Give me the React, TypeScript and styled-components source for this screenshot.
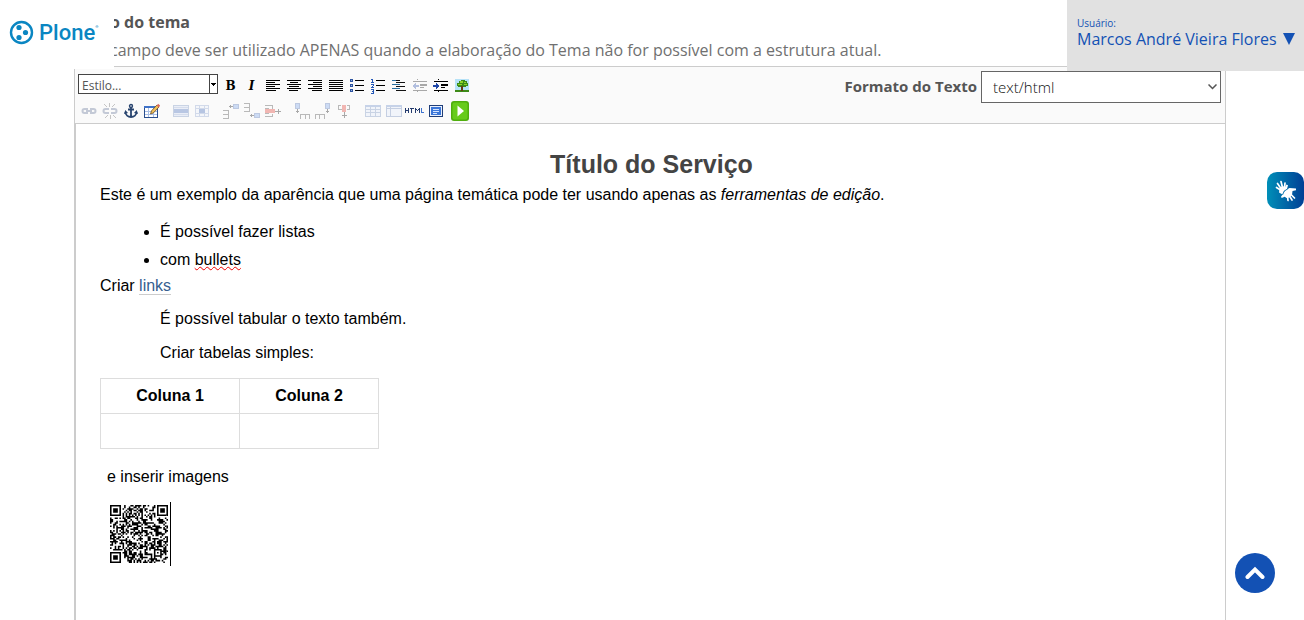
import React from "react";
import styled, { createGlobalStyle, css } from "styled-components";

const sans = `"Liberation Sans", Arial, sans-serif`;
const ui = `"Open Sans", "Noto Sans", sans-serif`;

const GlobalStyle = createGlobalStyle`
  *, *::before, *::after { box-sizing: border-box; }
  html, body { margin: 0; background: #fff; }
  body { font: 400 16px/28px ${ui}; color: #555; }
  button { border: 0; padding: 0; background: none; cursor: pointer; }
  a { color: inherit; text-decoration: none; }
  svg { display: block; flex: none; }
`;

const Page = styled.div`
  position: relative;
  min-height: 100vh;
  display: flex;
  flex-direction: column;
  padding: 8px 78px 0 74px;
`;

const LogoLink = styled.a`
  position: absolute;
  left: 0;
  top: 0;
  width: 114px;
  height: 69px;
  padding: 0 0 4px 9px;
  display: flex;
  align-items: center;
  gap: 5px;
  background: #fff;
  color: #0a86c2;
  font: 500 22px/24px Roboto, sans-serif;
`;

const LogoWord = styled.span`
  display: flex;
  sup { font-size: 4px; line-height: 12px; }
`;

const UserPanel = styled.div`
  position: absolute;
  right: 0;
  top: 0;
  width: 237px;
  height: 71px;
  padding: 16px 10px;
  background: #e1e1e1;
  color: #1351b4;
  white-space: nowrap;
`;

const UserCaption = styled.div`
  font-size: 10px;
  line-height: 14px;
`;

const UserButton = styled.button`
  display: flex;
  align-items: center;
  gap: 6px;
  color: #1351b4;
  font: 400 16px/18px ${ui};
`;

const FieldHead = styled.header`
  margin-left: 40px;
  padding-bottom: 2px;
  overflow: hidden;
  text-indent: -4px;
`;

const FieldTitle = styled.label`
  display: block;
  font-weight: 700;
`;

const FieldHelp = styled.p`
  margin: 0;
  color: #707070;
`;

const Editor = styled.section`
  flex: 1;
  display: flex;
  flex-direction: column;
  border: 1px solid #ccc;
  border-bottom: 0;
`;

const Toolbar = styled.div`
  display: flex;
  justify-content: space-between;
  padding: 3px 4px 0 3px;
  height: 57px;
  background: #fafafa;
  border-bottom: 1px solid #ccc;
`;

const ToolRows = styled.div`
  display: flex;
  flex-direction: column;
  gap: 1px;
  padding-top: 4px;
`;

const ToolRow = styled.div`
  display: flex;
  align-items: center;
  height: 24px;
`;

const ToolGroup = styled.div`
  display: flex;
  align-items: center;
  margin-right: 8px;
`;

const ToolButton = styled.button<{ $off?: boolean; $wide?: boolean }>`
  width: ${(p) => (p.$wide ? 28 : 21)}px;
  height: 20px;
  display: flex;
  align-items: center;
  justify-content: center;
  ${(p) => p.$off && css`opacity: 0.32;`}
`;

const Letter = styled.span<{ $italic?: boolean }>`
  font: ${(p) => (p.$italic ? "italic" : "normal")} 700 12px/16px "DejaVu Serif", serif;
  color: #000;
`;

const StyleBox = styled.div`
  position: relative;
  align-self: flex-start;
  width: 140px;
  height: 20px;
  margin-right: 2px;
`;

const StyleSelect = styled.select`
  display: block;
  appearance: none;
  width: 100%;
  height: 100%;
  padding: 2px 12px 0 3px;
  border: 1px solid #444;
  border-radius: 0;
  background: #fff;
  color: #555;
  font: 400 12px/18px ${ui};
`;

const StyleArrow = styled.span`
  position: absolute;
  right: 0;
  top: 0;
  width: 9px;
  height: 20px;
  border: 1px solid #444;
  display: flex;
  align-items: center;
  justify-content: center;
  pointer-events: none;
`;

const Format = styled.div`
  display: flex;
  align-items: flex-start;
  gap: 4px;
  padding-top: 1px;
  label { font-size: 15px; font-weight: 700; line-height: 30px; }
`;

const FormatBox = styled.div`
  position: relative;
  width: 240px;
  height: 32px;
  svg { position: absolute; right: 4px; top: 13px; pointer-events: none; }
`;

const FormatSelect = styled.select`
  display: block;
  appearance: none;
  width: 100%;
  height: 100%;
  padding: 0 11px;
  border: 1px solid #666;
  border-radius: 0;
  background: #fff;
  color: #111;
  font: 300 15px/28px ${ui};
`;

const Document = styled.article`
  flex: 1;
  padding: 24px 22px 0 24px;
  border-left: 1px solid #ccc;
  background: #fff;
  color: #000;
  font: 400 16px/24px ${sans};
  p { margin: 0; }
`;

const Heading = styled.h1`
  margin: 0 0 3px;
  text-align: center;
  color: #444;
  font: 700 25px/32px ${sans};
`;

const List = styled.ul`
  margin: 11px 0 0;
  padding-left: 60px;
  line-height: 28px;
`;

const Misspelt = styled.span`
  text-decoration: underline wavy #e00 1px;
  text-decoration-skip-ink: none;
  text-underline-offset: 1px;
`;

const TextLink = styled.a`
  color: #35608f;
  border-bottom: 1px solid #ccc;
`;

const Indented = styled.div`
  display: flex;
  flex-direction: column;
  gap: 10px;
  padding: 9px 0 13px 60px;
`;

const Grid = styled.table`
  border-collapse: collapse;
  th, td { width: 139px; height: 35px; padding: 0; border: 1px solid #ddd; }
`;

const Closing = styled.div`
  display: flex;
  flex-direction: column;
  align-items: flex-start;
  gap: 13px;
  padding: 16px 7px 0;
`;

const ImageLine = styled.div`
  padding: 3px 2px 3px 3px;
  border-right: 1px solid #000;
`;

const HandsButton = styled.button`
  position: absolute;
  right: 0;
  top: 172px;
  width: 37px;
  height: 37px;
  border-radius: 10px;
  background: linear-gradient(90deg, #008fb8, #003f95);
  display: flex;
  align-items: center;
  justify-content: center;
`;

const TopButton = styled.button`
  position: absolute;
  right: 29px;
  bottom: 27px;
  width: 40px;
  height: 40px;
  border-radius: 50%;
  background: #1351b4;
  display: flex;
  align-items: center;
  justify-content: center;
`;

const Icon = ({ children, w = 16, h = 16, smooth = false }: { children: React.ReactNode; w?: number; h?: number; smooth?: boolean }) => (
  <svg width={w} height={h} viewBox={`0 0 ${w} ${h}`} fill="none" shapeRendering={smooth ? "auto" : "crispEdges"} aria-hidden="true">
    {children}
  </svg>
);

/* Each entry of rows is [x, width] of one text line, two pixels apart. */
const Lines = ({ rows, color = "#000" }: { rows: [number, number][]; color?: string }) => (
  <Icon>
    {rows.map(([x, w], i) => (
      <rect key={i} x={x} y={2 + i * 2} width={w} height={1} fill={color} />
    ))}
  </Icon>
);

const alignLeft: [number, number][] = [[1, 14], [1, 9], [1, 14], [1, 9], [1, 14], [1, 10]];
const alignCenter: [number, number][] = [[1, 14], [4, 8], [1, 14], [3, 10], [1, 14], [3, 9]];
const alignRight: [number, number][] = [[1, 14], [6, 9], [1, 14], [6, 9], [1, 14], [5, 10]];
const justify: [number, number][] = [[1, 14], [1, 14], [1, 14], [1, 14], [1, 14], [1, 14]];

const Bullets = () => (
  <Icon>
    {[1, 6, 11].map((y) => (
      <g key={y}>
        <rect x="1" y={y} width="3" height="3" fill="#2c53a0" />
        <rect x="2" y={y + 1} width="1" height="1" fill="#9db5e0" />
        <rect x="6" y={y + 1} width="9" height="1" fill="#000" />
      </g>
    ))}
  </Icon>
);

const Numbers = () => (
  <Icon>
    <path d="M1 1.500h2M2.500 1v3M1 4.500h3M1 6.500h3M3.500 6v2M2 8.500h1M1 9.500h3M1 11.500h3M3.500 11v4M2 13.500h2M1 15.500h3" stroke="#2458b8" />
    <path d="M6 2.500h9M6 7.500h9M6 12.500h9" stroke="#000" />
  </Icon>
);

const Definition = () => (
  <Icon>
    <path d="M1 2.500h8M1 6.500h8M1 10.500h8" stroke="#2a6f9f" />
    <path d="M5 4.500h9M5 8.500h9M5 12.500h10M5 2.500h4" stroke="#111" />
  </Icon>
);

const Indent = ({ out = false }: { out?: boolean }) => (
  <Icon>
    <path d="M1 3.500h14M1 12.500h14M8 9.500h4" stroke="#000" />
    <path d="M8 6h7v2H8z" fill="#000" />
    <path d="M5.500 1v2M5.500 13v2" stroke="#000" strokeDasharray="1 1" />
    <rect x="0" y="5" width="7" height="6" fill="#fafafa" />
    <path d={out ? "M0 8l4-3v2h3v2H4v2z" : "M7 8L3 5v2H0v2h3v2z"} fill="#1f47a8" />
  </Icon>
);

const Tree = () => (
  <Icon>
    <rect x="1" y="1" width="14" height="13" fill="#b6e2f7" />
    <rect x="1" y="12" width="14" height="2" fill="#3d8a18" />
    <path d="M3 5h2V3h2V2h4v1h2v2h1v3h-2v1H4V8H3z" fill="#3a8c17" />
    <path d="M6 3h3v2H6zM10 4h2v1h-2zM4 6h4v1H4zM10 6h3v1h-3z" fill="#8fd32b" />
    <path d="M7 8h2v5H7z" fill="#653b13" />
  </Icon>
);

const Chain = ({ broken = false }: { broken?: boolean }) => (
  <Icon smooth>
    <path d="M7 6H3.500a2 2 0 000 4H7M9 6h3.500a2 2 0 010 4H9" stroke="#52658c" strokeWidth="2" />
    {broken ? (
      <path d="M7.500 4V0M5 4L2 1M10 4l3-3M8.500 12v4M6 12l-3 3M11 12l3 3" stroke="#555" />
    ) : (
      <path d="M5 8h6" stroke="#52658c" strokeWidth="2" />
    )}
  </Icon>
);

const Anchor = () => (
  <Icon smooth>
    <circle cx="8" cy="3" r="1.500" stroke="#28446f" strokeWidth="1.400" />
    <path d="M8 4.500V14M5 6.500h6M2.500 9c0 3 2.500 5 5.500 5s5.500-2 5.500-5" stroke="#28446f" strokeWidth="1.800" />
    <path d="M1 11l1.300-4L5 10zM15 11l-1.300-4L11 10z" fill="#28446f" />
  </Icon>
);

const TableSplit = () => (
  <Icon>
    <rect x="0" y="2" width="16" height="12" fill="#dfe9fb" />
    <path d="M.5 2.500h15v11H.5zM.5 6.500h15M.5 9.500h15M5.500 3v11M10.500 3v11" stroke="#6482b9" />
    <rect x="0" y="2" width="16" height="2" fill="#5b7fc4" />
  </Icon>
);

const TableEdit = () => (
  <Icon>
    <rect x="0" y="3" width="14" height="12" fill="#fff" />
    <path d="M0 8.500h14M0 11.500h14M4.500 5v10M9.500 5v10" stroke="#a9bfe6" />
    <path d="M.5 3.500h13v11H.5z" stroke="#2b4f8f" />
    <rect x="0" y="3" width="14" height="2" fill="#3f72c8" />
    <g shapeRendering="auto">
      <path d="M6.500 11l1-3.200L13 2l2 2-5.700 6z" fill="#f0c05a" stroke="#6b4d22" strokeWidth=".8" />
      <path d="M12.600 2.400L14.200.8l2 2-1.600 1.600z" fill="#d86a5a" />
    </g>
  </Icon>
);

const RowProps = () => (
  <Icon>
    <rect x="1" y="2" width="14" height="12" fill="#cbd8f2" />
    <path d="M.5 2.500h15v11H.5z" stroke="#6482b9" />
    <rect x="1" y="6" width="14" height="4" fill="#345eb5" />
    <path d="M1 4.500h14M1 11.500h14" stroke="#8ba3d0" />
  </Icon>
);

const CellProps = () => (
  <Icon>
    <rect x="1" y="2" width="14" height="12" fill="#e8eefb" />
    <path d="M1.500 2.500h13v11h-13zM1 5.500h14M1 10.500h14M5.500 3v11M10.500 3v11" stroke="#7f99cb" />
    <rect x="5" y="6" width="6" height="4" fill="#2b57b3" />
  </Icon>
);

const RowInsert = ({ after = false }: { after?: boolean }) => (
  <Icon>
    <g transform={after ? "translate(0 16) scale(1 -1)" : undefined}>
      <path d="M0 7.500h6M0 11.500h6M0 15.500h6M5.500 7v9" stroke="#333" />
      <path d="M6 3.500h4M7.500 2v3" stroke="#000" />
      <rect x="10.500" y="1.500" width="5" height="4" fill="#6f9be8" stroke="#3e65af" />
    </g>
  </Icon>
);

const RowDelete = () => (
  <Icon>
    <path d="M0 2.500h7v3M0 13.500h7v-3M0 5.500h4M0 10.500h4" stroke="#333" />
    <rect x="0" y="6" width="10" height="4" fill="#e02a1d" />
    <path d="M10 8.500h6M13.500 6v5" stroke="#000" />
  </Icon>
);

const ColInsert = ({ after = false }: { after?: boolean }) => (
  <Icon>
    <g transform={after ? "translate(16 0) scale(-1 1)" : undefined}>
      <rect x="1.500" y=".5" width="4" height="5" fill="#6f9be8" stroke="#3e65af" />
      <path d="M3.500 6v4M2 8.500h3" stroke="#000" />
      <path d="M6.500 16v-5h9v5M11.500 11v5" stroke="#333" />
    </g>
  </Icon>
);

const ColDelete = () => (
  <Icon>
    <path d="M2.500 2v4h3M13.500 2v4h-3M2 2.500h3M11 2.500h3" stroke="#333" />
    <rect x="6" y="2" width="4" height="7" fill="#e02a1d" />
    <path d="M8 9v6M6 12.500h5" stroke="#000" />
  </Icon>
);

const TableMerge = () => (
  <Icon>
    <rect x="1" y="2" width="14" height="12" fill="#dfe9fb" />
    <path d="M.5 2.500h15v11H.5zM1 5.500h15M4.500 3v11" stroke="#5877b0" />
    <rect x="0" y="2" width="16" height="2" fill="#5b7fc4" />
  </Icon>
);

const Html = () => (
  <Icon w={19} h={8}>
    <path d="M.5 1v5M3.500 1v5M1 3.500h2M5 1.500h4M6.500 1v5M10.500 6V1M11 2.500h1M12 3.500h1M13 2.500h1M14.500 1v5" stroke="#243b6e" />
    <path d="M16.500 1v5M16 5.500h3" stroke="#3f74d0" />
  </Icon>
);

const FullScreen = () => (
  <Icon>
    <rect x="1.500" y="2.500" width="13" height="11" fill="#eaf1fd" stroke="#203e78" />
    <rect x="3" y="4" width="10" height="8" fill="#3b76d8" />
    <path d="M5 6.500h6M5 8.500h6M5 10.500h4" stroke="#d4e4ff" />
  </Icon>
);

const Play = () => (
  <Icon w={20} h={20} smooth>
    <rect x="1" y="0" width="18" height="20" rx="3" fill="#4fae0d" />
    <rect x="2.500" y="1.500" width="15" height="17" rx="2" fill="#67cb1b" />
    <path d="M7.500 4.500l6.500 5.500-6.500 5.500z" fill="#fff" />
  </Icon>
);

/* Two signing hands: one with its fingers up to the left, one with them down to the right. */
const Hands = () => (
  <Icon w={24} h={24} smooth>
    <g stroke="#fff" strokeLinecap="round" strokeWidth="1.700">
      <path d="M6.500 11L2.500 8.500M7 9.500L3.500 4.500M8.500 8.500L7 2.500M10.500 8.500L11 4" />
      <path d="M13.500 17l.5 4.500M15.500 17l2.500 4M17 15.500l3.500 3.500" />
    </g>
    <path d="M5.500 9.500L8.500 7l2.500 1 1.500-2.500 1.500.7L13 10l-3 2-1.500 3.500-3.500-2z" fill="#fff" />
    <path d="M9.500 14l1.500-2.500 4.500-2.500 6.500.5v1.700l-3.500.8-.5 4-2.500 2.500-3 .5-1.800-1.200-3 1.200-.7-1.200z" fill="#fff" />
    <path d="M8.500 16l1.700-3.800 3.600-2.400" stroke="#0670a9" strokeWidth=".8" />
  </Icon>
);

/* 37 x 37 symbol: three finder squares, an alignment square, timing rows and data modules. */
const SIZE = 37;
const ring = (x: number, y: number, cx: number, cy: number) => Math.max(Math.abs(x - cx), Math.abs(y - cy));
const isDark = (x: number, y: number) => {
  for (const [cx, cy] of [[3, 3], [SIZE - 4, 3], [3, SIZE - 4]]) {
    const d = ring(x, y, cx, cy);
    if (d <= 4) return d !== 2 && d !== 4;
  }
  const a = ring(x, y, 30, 30);
  if (a <= 2) return a !== 1;
  if (x === 6 || y === 6) return (x + y) % 2 === 0;
  let h = (x * 374761393 + y * 668265263) | 0;
  h = Math.imul(h ^ (h >>> 13), 1274126177);
  return ((h ^ (h >>> 16)) & 255) < 132;
};
let qrPath = "";
for (let y = 0; y < SIZE; y++) for (let x = 0; x < SIZE; x++) if (isDark(x, y)) qrPath += `M${x} ${y}h1v1h-1z`;

const QrCode = () => (
  <svg width="58" height="58" viewBox="0 0 37 37" role="img" aria-label="QR">
    <path d={qrPath} fill="#000" />
  </svg>
);

type Tool = { name: string; icon: React.ReactNode; off?: boolean; wide?: boolean };

const Tools = ({ items }: { items: Tool[] }) => (
  <ToolGroup>
    {items.map((t) => (
      <ToolButton key={t.name} type="button" aria-label={t.name} $off={t.off} $wide={t.wide}>
        {t.icon}
      </ToolButton>
    ))}
  </ToolGroup>
);

const textTools: Tool[] = [
  { name: "Negrito", icon: <Letter>B</Letter> },
  { name: "Itálico", icon: <Letter $italic>I</Letter> },
  { name: "Alinhar à esquerda", icon: <Lines rows={alignLeft} /> },
  { name: "Centralizar", icon: <Lines rows={alignCenter} /> },
  { name: "Alinhar à direita", icon: <Lines rows={alignRight} /> },
  { name: "Justificar", icon: <Lines rows={justify} /> },
  { name: "Lista", icon: <Bullets /> },
  { name: "Lista numerada", icon: <Numbers /> },
  { name: "Lista de definição", icon: <Definition /> },
  { name: "Diminuir recuo", icon: <Indent out />, off: true },
  { name: "Aumentar recuo", icon: <Indent /> },
  { name: "Inserir imagem", icon: <Tree /> },
];

const objectTools: Tool[][] = [
  [
    { name: "Inserir link", icon: <Chain />, off: true },
    { name: "Remover link", icon: <Chain broken />, off: true },
    { name: "Âncora", icon: <Anchor /> },
    { name: "Inserir tabela", icon: <TableEdit /> },
  ],
  [
    { name: "Propriedades da linha", icon: <RowProps />, off: true },
    { name: "Propriedades da célula", icon: <CellProps />, off: true },
  ],
  [
    { name: "Inserir linha antes", icon: <RowInsert />, off: true },
    { name: "Inserir linha depois", icon: <RowInsert after />, off: true },
    { name: "Remover linha", icon: <RowDelete />, off: true },
  ],
  [
    { name: "Inserir coluna antes", icon: <ColInsert />, off: true },
    { name: "Inserir coluna depois", icon: <ColInsert after />, off: true },
    { name: "Remover coluna", icon: <ColDelete />, off: true },
  ],
  [
    { name: "Dividir células", icon: <TableSplit />, off: true },
    { name: "Mesclar células", icon: <TableMerge />, off: true },
    { name: "Editar HTML", icon: <Html /> },
    { name: "Tela cheia", icon: <FullScreen /> },
    { name: "Inserir mídia", icon: <Play />, wide: true },
  ],
];

export default function App() {
  return (
    <Page>
      <GlobalStyle />
      <FieldHead>
        <FieldTitle htmlFor="formato">o do tema</FieldTitle>
        <FieldHelp>
          campo deve ser utilizado APENAS quando a elaboração do Tema não for possível com a estrutura atual.
        </FieldHelp>
      </FieldHead>

      <Editor>
        <Toolbar>
          <ToolRows>
            <ToolRow>
              <StyleBox>
                <StyleSelect aria-label="Estilo">
                  <option>Estilo...</option>
                </StyleSelect>
                <StyleArrow>
                  <Icon w={5} h={3}>
                    <path d="M0 0h5v1H4v1H3v1H2V2H1V1H0z" fill="#000" />
                  </Icon>
                </StyleArrow>
              </StyleBox>
              <Tools items={textTools} />
            </ToolRow>
            <ToolRow>
              {objectTools.map((group) => (
                <Tools key={group[0].name} items={group} />
              ))}
            </ToolRow>
          </ToolRows>
          <Format>
            <label htmlFor="formato">Formato do Texto</label>
            <FormatBox>
              <FormatSelect id="formato">
                <option>text/html</option>
              </FormatSelect>
              <Icon w={9} h={6} smooth>
                <path d="M.5 .5l4 4 4-4" stroke="#555" strokeWidth="1.500" />
              </Icon>
            </FormatBox>
          </Format>
        </Toolbar>

        <Document>
          <Heading>Título do Serviço</Heading>
          <p>
            Este é um exemplo da aparência que uma página temática pode ter usando apenas as <em>ferramentas de edição</em>.
          </p>
          <List>
            <li>É possível fazer listas</li>
            <li>
              com <Misspelt>bullets</Misspelt>
            </li>
          </List>
          <p>
            Criar <TextLink href="#links">links</TextLink>
          </p>
          <Indented>
            <p>É possível tabular o texto também.</p>
            <p>Criar tabelas simples:</p>
          </Indented>
          <Grid>
            <thead>
              <tr>
                <th>Coluna 1</th>
                <th>Coluna 2</th>
              </tr>
            </thead>
            <tbody>
              <tr>
                <td />
                <td />
              </tr>
            </tbody>
          </Grid>
          <Closing>
            <p>e inserir imagens</p>
            <ImageLine>
              <QrCode />
            </ImageLine>
          </Closing>
        </Document>
      </Editor>

      <LogoLink href="#inicio" aria-label="Plone">
        <Icon w={25} h={25} smooth>
          <circle cx="12.500" cy="12.500" r="10.500" stroke="#0a86c2" strokeWidth="2.400" />
          <circle cx="10" cy="7.500" r="2.600" fill="#0a86c2" />
          <circle cx="16.500" cy="12.500" r="2.600" fill="#0a86c2" />
          <circle cx="10" cy="17.500" r="2.600" fill="#0a86c2" />
        </Icon>
        <LogoWord>
          Plone<sup>®</sup>
        </LogoWord>
      </LogoLink>

      <UserPanel>
        <UserCaption>Usuário:</UserCaption>
        <UserButton type="button">
          Marcos André Vieira Flores
          <Icon w={12} h={12} smooth>
            <path d="M0 0h12L6 12z" fill="#1351b4" />
          </Icon>
        </UserButton>
      </UserPanel>

      <HandsButton type="button" aria-label="Libras">
        <Hands />
      </HandsButton>

      <TopButton type="button" aria-label="Voltar ao topo">
        <Icon w={20} h={14} smooth>
          <path d="M2.500 11L10 3.500 17.500 11" stroke="#fff" strokeWidth="4" strokeLinecap="round" />
        </Icon>
      </TopButton>
    </Page>
  );
}
